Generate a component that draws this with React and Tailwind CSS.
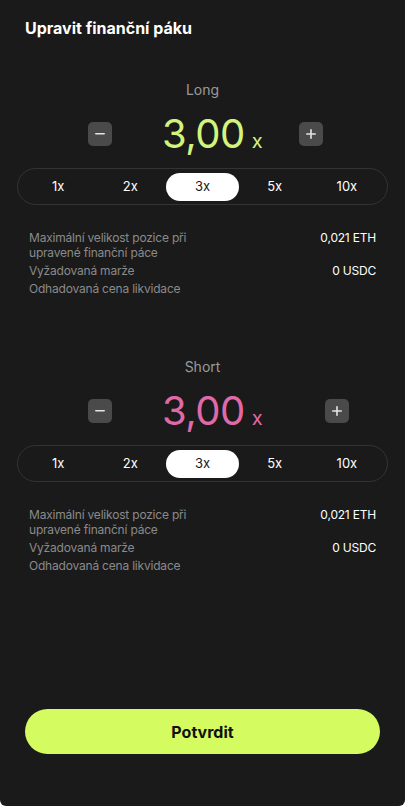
const OPTIONS = ['1x', '2x', '3x', '5x', '10x'];

const ROWS = [
  { label: ['Maximální velikost pozice při', 'upravené finanční páce'], value: '0,021 ETH' },
  { label: ['Vyžadovaná marže'], value: '0 USDC' },
  { label: ['Odhadovaná cena likvidace'], value: '' },
];

function StepButton({ children }) {
  return (
    <button className="flex h-6 w-6 items-center justify-center rounded-[5px] bg-[#4a4a4a] text-white">
      {children}
    </button>
  );
}

function Section({ title, color, plusGap }) {
  return (
    <div className="flex flex-col">
      <div className="text-center text-[14px] leading-none text-[#9a9a9a]">{title}</div>
      <div className="mt-[17px] flex h-[40px] items-center pl-[88px]">
        <StepButton>
          <svg width="10" height="2" viewBox="0 0 10 2"><rect width="10" height="1.6" rx="0.8" fill="#e5e5e5" /></svg>
        </StepButton>
        <div className={`ml-[50px] flex items-baseline ${color}`}>
          <span className="text-[40px] leading-none tracking-[-0.5px]">3,00</span>
          <span className="ml-[7px] text-[20px] leading-none">x</span>
        </div>
        <div className={plusGap}>
          <StepButton>
            <svg width="10" height="10" viewBox="0 0 10 10">
              <rect x="0" y="4.2" width="10" height="1.6" rx="0.8" fill="#e5e5e5" />
              <rect x="4.2" y="0" width="1.6" height="10" rx="0.8" fill="#e5e5e5" />
            </svg>
          </StepButton>
        </div>
      </div>
      <div className="mx-[17px] mt-[14px] grid h-[37px] grid-cols-5 items-center rounded-full border border-[#333333] px-[4px]">
        {OPTIONS.map((o) => (
          <div
            key={o}
            className={`flex h-[28px] items-center justify-center rounded-full text-[13px] ${
              o === '3x' ? 'bg-white text-[#1a1a1a]' : 'text-white'
            }`}
          >
            {o}
          </div>
        ))}
      </div>
      <div className="mt-[25px] flex flex-col gap-[3px] px-[29px] text-[12px] leading-[15px] tracking-[-0.2px]">
        {ROWS.map((r, i) => (
          <div key={i} className="flex justify-between">
            <div className="text-[#8a8a8a]">
              {r.label.map((l) => (
                <div key={l}>{l}</div>
              ))}
            </div>
            <div className="text-white">{r.value}</div>
          </div>
        ))}
      </div>
    </div>
  );
}

export default function App() {
  return (
    <div className="min-h-[806px] bg-white" style={{ fontFamily: 'Inter, "Noto Sans", sans-serif' }}>
      <div className="flex h-[806px] flex-col rounded-b-[6px] bg-[#1a1a1a]">
        <h1 className="px-[25px] pt-[18px] text-[16px] font-bold leading-5 text-white">
          Upravit finanční páku
        </h1>
        <div className="mt-[45px]">
          <Section title="Long" color="text-[#d3f47c]" plusGap="ml-[36px]" />
        </div>
        <div className="mt-[64px]">
          <Section title="Short" color="text-[#e06aa9]" plusGap="ml-[62px]" />
        </div>
        <div className="mt-auto px-[25px] pb-[52px]">
          <button className="h-[45px] w-full rounded-full bg-[#d4fb5f] text-[16px] font-bold text-[#111]">
            Potvrdit
          </button>
        </div>
      </div>
    </div>
  );
}
